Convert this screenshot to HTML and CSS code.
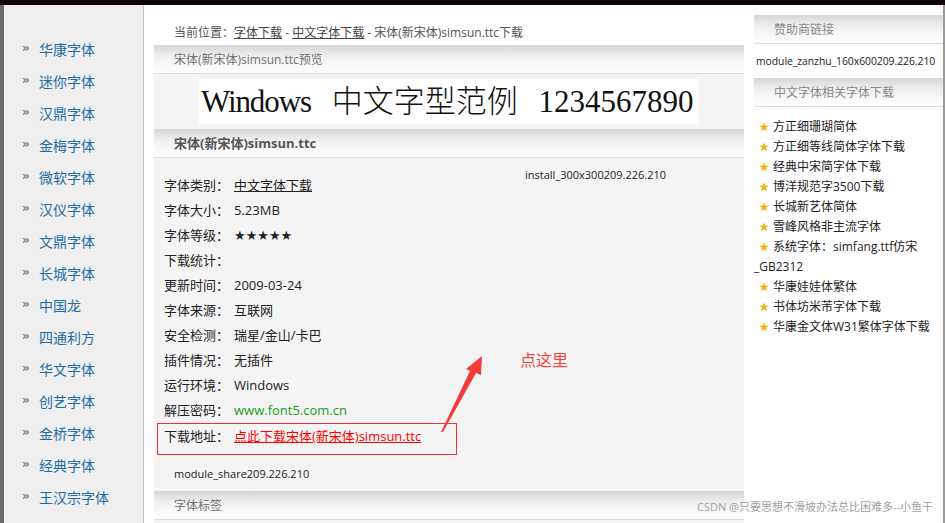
FILE: index.html
```html
<!DOCTYPE html>
<html lang="zh-CN">
<head>
<meta charset="utf-8">
<title>宋体(新宋体)simsun.ttc下载</title>
<link rel="stylesheet" href="styles.css">
</head>
<body>
<div class="topbar"></div>
<div class="page">
  <div class="edge"></div>
  <aside class="side">
    <ul class="nav">
      <li><span class="raq">»</span><a href="#">华康字体</a></li>
      <li><span class="raq">»</span><a href="#">迷你字体</a></li>
      <li><span class="raq">»</span><a href="#">汉鼎字体</a></li>
      <li><span class="raq">»</span><a href="#">金梅字体</a></li>
      <li><span class="raq">»</span><a href="#">微软字体</a></li>
      <li><span class="raq">»</span><a href="#">汉仪字体</a></li>
      <li><span class="raq">»</span><a href="#">文鼎字体</a></li>
      <li><span class="raq">»</span><a href="#">长城字体</a></li>
      <li><span class="raq">»</span><a href="#">中国龙</a></li>
      <li><span class="raq">»</span><a href="#">四通利方</a></li>
      <li><span class="raq">»</span><a href="#">华文字体</a></li>
      <li><span class="raq">»</span><a href="#">创艺字体</a></li>
      <li><span class="raq">»</span><a href="#">金桥字体</a></li>
      <li><span class="raq">»</span><a href="#">经典字体</a></li>
      <li><span class="raq">»</span><a href="#">王汉宗字体</a></li>
    </ul>
  </aside>
  <div class="gap"></div>
  <main class="main">
    <div class="crumb">当前位置：<a href="#">字体下载</a> - <a href="#">中文字体下载</a> - 宋体(新宋体)simsun.ttc下载</div>
    <div class="content">
      <div class="hd">宋体(新宋体)simsun.ttc预览</div>
      <div class="preview"><div class="sample"><span class="win">Windows</span> 中文字型范例 1234567890</div></div>
      <div class="hd hd-b">宋体(新宋体)simsun.ttc</div>
      <div class="info">
        <div class="info-top">
          <div class="props">
            <div class="row"><span class="lb">字体类别：</span><a class="val ul" href="#">中文字体下载</a></div>
            <div class="row"><span class="lb">字体大小：</span><span class="val">5.23MB</span></div>
            <div class="row"><span class="lb">字体等级：</span><span class="val stars">★★★★★</span></div>
            <div class="row"><span class="lb">下载统计：</span><span class="val"></span></div>
            <div class="row"><span class="lb">更新时间：</span><span class="val">2009-03-24</span></div>
            <div class="row"><span class="lb">字体来源：</span><span class="val">互联网</span></div>
            <div class="row"><span class="lb">安全检测：</span><span class="val">瑞星/金山/卡巴</span></div>
            <div class="row"><span class="lb">插件情况：</span><span class="val">无插件</span></div>
            <div class="row"><span class="lb">运行环境：</span><span class="val">Windows</span></div>
            <div class="row"><span class="lb">解压密码：</span><span class="val green">www.font5.com.cn</span></div>
          </div>
          <div class="ad">install_300x300209.226.210</div>
        </div>
        <div class="dlbox">
          <div class="row"><span class="lb">下载地址：</span><a class="val red ul" href="#">点此下载宋体(新宋体)simsun.ttc</a></div>
        </div>
        <div class="share">module_share209.226.210</div>
      </div>
      <div class="hd">字体标签</div>
    </div>
  </main>
  <div class="gap"></div>
  <aside class="right">
    <div class="hd hd-r">赞助商链接</div>
    <div class="zanzhu">module_zanzhu_160x600209.226.210</div>
    <div class="hd hd-r">中文字体相关字体下载</div>
    <ul class="rel">
      <li><svg class="star" viewBox="0 0 10 10"><polygon points="5,0.4 6.3,3.6 9.7,3.7 7,5.9 8,9.4 5,7.4 2,9.4 3,5.9 0.3,3.7 3.7,3.6"/></svg>方正细珊瑚简体</li>
      <li><svg class="star" viewBox="0 0 10 10"><polygon points="5,0.4 6.3,3.6 9.7,3.7 7,5.9 8,9.4 5,7.4 2,9.4 3,5.9 0.3,3.7 3.7,3.6"/></svg>方正细等线简体字体下载</li>
      <li><svg class="star" viewBox="0 0 10 10"><polygon points="5,0.4 6.3,3.6 9.7,3.7 7,5.9 8,9.4 5,7.4 2,9.4 3,5.9 0.3,3.7 3.7,3.6"/></svg>经典中宋简字体下载</li>
      <li><svg class="star" viewBox="0 0 10 10"><polygon points="5,0.4 6.3,3.6 9.7,3.7 7,5.9 8,9.4 5,7.4 2,9.4 3,5.9 0.3,3.7 3.7,3.6"/></svg>博洋规范字3500下载</li>
      <li><svg class="star" viewBox="0 0 10 10"><polygon points="5,0.4 6.3,3.6 9.7,3.7 7,5.9 8,9.4 5,7.4 2,9.4 3,5.9 0.3,3.7 3.7,3.6"/></svg>长城新艺体简体</li>
      <li><svg class="star" viewBox="0 0 10 10"><polygon points="5,0.4 6.3,3.6 9.7,3.7 7,5.9 8,9.4 5,7.4 2,9.4 3,5.9 0.3,3.7 3.7,3.6"/></svg>雪峰风格非主流字体</li>
      <li><svg class="star" viewBox="0 0 10 10"><polygon points="5,0.4 6.3,3.6 9.7,3.7 7,5.9 8,9.4 5,7.4 2,9.4 3,5.9 0.3,3.7 3.7,3.6"/></svg>系统字体：simfang.ttf仿宋<br>_GB2312</li>
      <li><svg class="star" viewBox="0 0 10 10"><polygon points="5,0.4 6.3,3.6 9.7,3.7 7,5.9 8,9.4 5,7.4 2,9.4 3,5.9 0.3,3.7 3.7,3.6"/></svg>华康娃娃体繁体</li>
      <li><svg class="star" viewBox="0 0 10 10"><polygon points="5,0.4 6.3,3.6 9.7,3.7 7,5.9 8,9.4 5,7.4 2,9.4 3,5.9 0.3,3.7 3.7,3.6"/></svg>书体坊米芾字体下载</li>
      <li><svg class="star" viewBox="0 0 10 10"><polygon points="5,0.4 6.3,3.6 9.7,3.7 7,5.9 8,9.4 5,7.4 2,9.4 3,5.9 0.3,3.7 3.7,3.6"/></svg>华康金文体W31繁体字体下载</li>
    </ul>
  </aside>
  <div class="redge"></div>
</div>
<svg class="annot" viewBox="0 0 945 523" aria-hidden="true">
  <polygon points="441,432 470,371 466,369 482,356 481,375 476,373 443,432"/>
</svg>
<div class="tip">点这里</div>
<div class="wm">CSDN @只要思想不滑坡办法总比困难多--小鱼干</div>
</body>
</html>
```
FILE: styles.css
```css
* { box-sizing: border-box; }
html, body { margin: 0; padding: 0; }
body {
  width: 945px;
  height: 523px;
  overflow: hidden;
  background: #fff;
  font-family: "Open Sans", "Noto Sans CJK SC", sans-serif;
  font-size: 12px;
  color: #222;
  position: relative;
}
a { color: inherit; text-decoration: none; }
ul { margin: 0; padding: 0; list-style: none; }

.topbar { height: 5px; background: #120404; }

.page {
  display: flex;
  height: 518px;
}
.edge { width: 4px; background: #6a6a6a; flex: none; }
.side {
  width: 140px;
  flex: none;
  background: #efefef;
  border-right: 1px solid #c9c9c9;
  padding-top: 29px;
  padding-left: 18px;
}
.nav li {
  display: flex;
  align-items: center;
  height: 32px;
  font-size: 14px;
  line-height: 32px;
}
.nav .raq {
  width: 17px;
  font-family: "DejaVu Sans", sans-serif;
  font-size: 12px;
  font-weight: bold;
  color: #7a7a7a;
  position: relative;
  top: -2px;
}
.nav a { color: #1d6ca6; }

.gap { width: 10px; flex: none; }

.main {
  width: 590px;
  flex: none;
  display: flex;
  flex-direction: column;
}
.crumb {
  height: 40px;
  padding: 20px 0 0 20px;
  line-height: 16px;
  color: #555;
  font-size: 12px;
}
.crumb a { text-decoration: underline; color: #444; }
.content { flex: 1; background: #f4f4f4; }

.hd {
  height: 29px;
  border-top: 1px solid #d6d6d6;
  border-bottom: 1px solid #dcdcdc;
  background: linear-gradient(#d8d8d8 0%, #eeeeee 35%, #fafafa 75%, #fdfdfd 100%);
  line-height: 27px;
  padding-left: 20px;
  color: #707070;
  font-size: 12px;
}
.hd-b { font-weight: bold; font-size: 13px; color: #555; }

.preview { padding: 5px 0 5px 45px; }
.sample {
  width: 500px;
  height: 45px;
  background: #fff;
  padding-left: 2px;
  line-height: 45px;
  font-family: "Liberation Serif", "Noto Sans CJK SC", serif;
  font-size: 31px;
  font-weight: 300;
  color: #111;
  word-spacing: 13px;
  white-space: nowrap;
  overflow: hidden;
}
.win { letter-spacing: -1.1px; }

.info { padding: 10px 0 9px 10px; }
.info-top { display: flex; }
.props { width: 361px; padding-top: 5px; }
.row {
  display: flex;
  height: 25px;
  line-height: 25px;
  font-size: 13px;
  color: #222;
}
.lb { width: 70px; flex: none; white-space: nowrap; }
.val { white-space: nowrap; }
.ul { text-decoration: underline; }
.stars { font-family: "DejaVu Sans", sans-serif; font-size: 13px; letter-spacing: 0; }
.green { color: #1c9a1c; }
.red { color: #f00; }
.ad { font-size: 11px; line-height: 14px; color: #222; white-space: nowrap; }

.dlbox {
  width: 300px;
  margin-left: -7px;
  padding: 0 0 5px 6px;
  border: 1px solid #ee3333;
}
.share {
  margin-top: 11px;
  padding-left: 10px;
  line-height: 16px;
  font-size: 11px;
  color: #222;
}

.right {
  width: 189px;
  flex: none;
  padding-top: 10px;
  background: #fff;
}
.hd-r { color: #888; }
.zanzhu {
  height: 34px;
  line-height: 34px;
  padding-left: 2px;
  font-size: 10.4px;
  letter-spacing: -0.05px;
  color: #222;
  white-space: nowrap;
}
.rel { padding-top: 10px; }
.rel li {
  line-height: 20px;
  font-size: 12px;
  color: #222;
}
.star {
  width: 8px;
  height: 8px;
  margin: 0 5px 0 6px;
  vertical-align: 0px;
  fill: #f7b500;
  stroke: #e39300;
  stroke-width: 0.6;
}
.redge { width: 2px; flex: none; background: #9a9a9a; }

.annot {
  position: absolute;
  left: 0;
  top: 0;
  width: 945px;
  height: 523px;
  pointer-events: none;
  fill: #f33b3b;
}
.tip {
  position: absolute;
  left: 520px;
  top: 350px;
  line-height: 20px;
  font-size: 16px;
  color: #f24444;
}
.wm {
  position: absolute;
  left: 697px;
  top: 500px;
  line-height: 14px;
  font-size: 11px;
  color: #a0a0a0;
  white-space: nowrap;
}
```
